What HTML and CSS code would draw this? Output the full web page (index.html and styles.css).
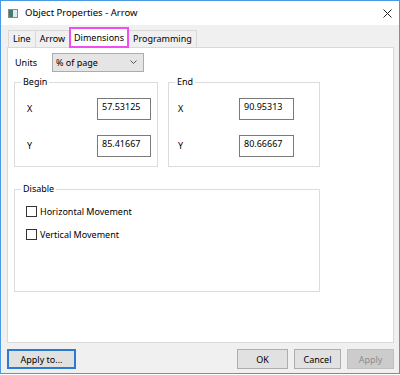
FILE: index.html
```html
<!DOCTYPE html>
<html lang="en">

<head>
    <meta charset="UTF-8">
    <title>Object Properties - Arrow</title>
    <link rel="stylesheet" href="styles.css">
</head>

<body>
    <div class="window">
        <!-- 標題列 -->
        <div class="titlebar">
            <svg class="app-icon" width="10" height="9" viewBox="0 0 10 9">
                <rect x="0.5" y="0.5" width="9" height="8" fill="#e4e9ef" stroke="#8a8a8a" />
                <rect x="1" y="1" width="4" height="7" fill="#3f7d6c" />
            </svg>
            <span class="title">Object Properties - Arrow</span>
            <svg class="close" width="9" height="9" viewBox="0 0 9 9">
                <path d="M0.5 0.5 L8.5 8.5 M8.5 0.5 L0.5 8.5" stroke="#222" stroke-width="1" />
            </svg>
        </div>

        <div class="content">
            <!-- 頁籤 -->
            <div class="tabs">
                <div class="tab">Line</div>
                <div class="tab">Arrow</div>
                <div class="tab active">Dimensions</div>
                <div class="tab">Programming</div>
            </div>

            <div class="panel">
                <div class="units-row">
                    <span class="units-label">Units</span>
                    <div class="combo">
                        <span>% of page</span>
                        <svg width="7" height="5" viewBox="0 0 7 5">
                            <polyline points="0.5,0.5 3.5,3.5 6.5,0.5" fill="none" stroke="#555" />
                        </svg>
                    </div>
                </div>

                <div class="coord-row">
                    <fieldset class="group begin">
                        <legend>Begin</legend>
                        <div class="group-body">
                            <div class="field">
                                <span>X</span>
                                <div class="input">57.53125</div>
                            </div>
                            <div class="field">
                                <span>Y</span>
                                <div class="input">85.41667</div>
                            </div>
                        </div>
                    </fieldset>
                    <fieldset class="group end">
                        <legend>End</legend>
                        <div class="group-body">
                            <div class="field">
                                <span>X</span>
                                <div class="input">90.95313</div>
                            </div>
                            <div class="field">
                                <span>Y</span>
                                <div class="input">80.66667</div>
                            </div>
                        </div>
                    </fieldset>
                </div>

                <fieldset class="group disable">
                    <legend>Disable</legend>
                    <div class="group-body">
                        <label class="check"><span class="box"></span>Horizontal Movement</label>
                        <label class="check"><span class="box"></span>Vertical Movement</label>
                    </div>
                </fieldset>
            </div>

            <!-- 按鈕列 -->
            <div class="buttons">
                <button type="button" class="btn apply-to">Apply to...</button>
                <div class="btn-group">
                    <button type="button" class="btn ok">OK</button>
                    <button type="button" class="btn cancel">Cancel</button>
                    <button type="button" class="btn apply" disabled>Apply</button>
                </div>
            </div>
        </div>
    </div>
</body>

</html>
```

FILE: styles.css
```css
* {
    box-sizing: border-box;
    margin: 0px;
    padding: 0px;
}

body {
    background-color: #ffffff;
    font-family: "Noto Sans", "Liberation Sans", sans-serif;
    font-size: 9px;
    line-height: 12px;
    color: #000;
}

/* 視窗 */
.window {
    width: 400px;
    height: 374px;
    border: 1px solid #4a9ae3;
    background-color: #f0f0f0;
    display: flex;
    flex-direction: column;
}

.titlebar {
    height: 24px;
    background-color: #ffffff;
    display: flex;
    align-items: center;
    padding: 0px 7px 0px 7px;
}

.app-icon {
    margin-right: 7px;
}

.title {
    font-size: 9.5px;
}

.close {
    margin-left: auto;
}

.content {
    padding: 3px 5px 0px 6px;
}

/* 頁籤 */
.tabs {
    display: flex;
    align-items: flex-end;
    height: 19px;
    padding-left: 1px;
}

.tab {
    height: 17px;
    padding: 0px 4px;
    border: 1px solid #d9d9d9;
    border-bottom: none;
    margin-left: -1px;
    display: flex;
    align-items: center;
    background-color: #f0f0f0;
}

.tab:first-child {
    margin-left: 0px;
}

.tab.active {
    position: relative;
    z-index: 1;
    height: 21px;
    margin-bottom: -1px;
    padding: 0px 3px;
    background-color: #ffffff;
    border: 2px solid #f04ef0;
}

.panel {
    height: 296px;
    background-color: #ffffff;
    border: 1px solid #d9d9d9;
    padding: 5px 0px 0px 6px;
}

.units-row {
    display: flex;
    align-items: center;
    height: 19px;
}

.units-label {
    width: 38px;
    padding-left: 1px;
}

.combo {
    width: 92px;
    height: 19px;
    background-color: #e5e5e5;
    border: 1px solid #acacac;
    display: flex;
    align-items: center;
    justify-content: space-between;
    padding: 0px 6px 0px 3px;
}

/* 群組框 */
.group {
    border: 1px solid #dcdcdc;
    min-width: 0px;
    padding: 0px;
}

.group legend {
    margin-left: 6px;
    padding: 0px 2px;
    line-height: 12px;
}

.coord-row {
    display: flex;
    gap: 10px;
    margin-top: 4px;
}

.begin {
    width: 144px;
}

.begin .group-body {
    padding: 10px 6px 9px 12px;
}

.end {
    width: 152px;
}

.end .group-body {
    padding: 10px 25px 9px 9px;
}

.field {
    display: flex;
    align-items: center;
    justify-content: space-between;
    height: 22px;
}

.field + .field {
    margin-top: 15px;
}

.input {
    width: 54px;
    height: 22px;
    border: 1px solid #7a7a7a;
    background-color: #ffffff;
    padding: 2px 0px 0px 4px;
}

.end .input {
    width: 55px;
}

.disable {
    width: 306px;
    height: 109px;
    margin-top: 16px;
}

.disable .group-body {
    padding: 11px 0px 0px 11px;
}

.check {
    display: flex;
    align-items: center;
    height: 11px;
    gap: 3px;
}

.check + .check {
    margin-top: 12px;
}

.box {
    width: 11px;
    height: 11px;
    border: 1px solid #333;
    background-color: #ffffff;
}

/* 按鈕 */
.buttons {
    display: flex;
    justify-content: space-between;
    margin-top: 6px;
}

.btn-group {
    display: flex;
    gap: 6px;
}

.btn {
    height: 20px;
    font-family: inherit;
    font-size: 9px;
    color: #000;
    background-color: #e1e1e1;
    border: 1px solid #adadad;
}

.apply-to {
    width: 69px;
    border: 2px solid #2a7ad2;
}

.ok {
    width: 51px;
}

.cancel {
    width: 47px;
}

.apply {
    width: 47px;
    background-color: #cccccc;
    border-color: #bfbfbf;
    color: #8c8c8c;
}
```
